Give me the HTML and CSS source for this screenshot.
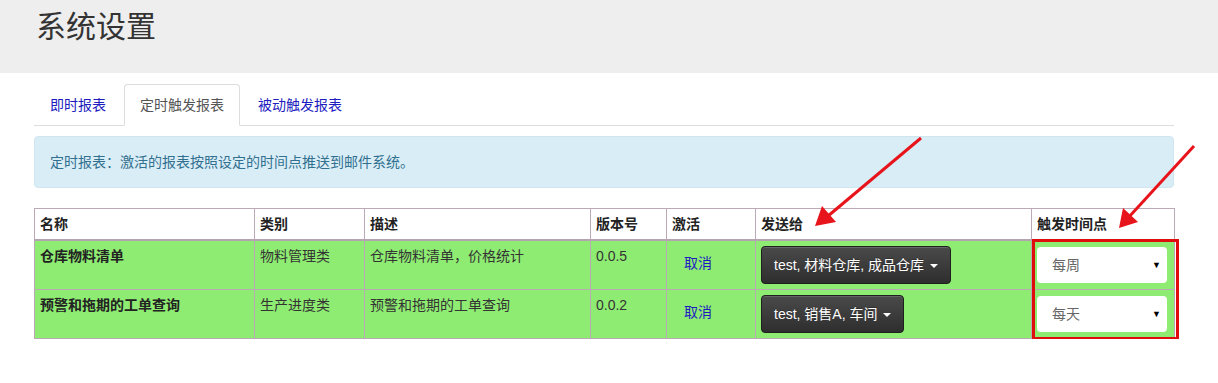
FILE: index.html
```html
<!DOCTYPE html>
<html lang="zh-CN">
<head>
    <meta charset="UTF-8">
    <title>系统设置</title>
    <link rel="stylesheet" href="styles.css">
</head>
<body>
    <div class="page-header">
        <h1>系统设置</h1>
    </div>

    <div class="container">
        <ul class="nav-tabs">
            <li><a href="#">即时报表</a></li>
            <li class="active"><a href="#">定时触发报表</a></li>
            <li><a href="#">被动触发报表</a></li>
        </ul>

        <div class="alert">定时报表：激活的报表按照设定的时间点推送到邮件系统。</div>

        <table class="report-table">
            <colgroup>
                <col class="c-name">
                <col class="c-type">
                <col class="c-desc">
                <col class="c-ver">
                <col class="c-act">
                <col class="c-send">
                <col class="c-time">
            </colgroup>
            <thead>
                <tr>
                    <th>名称</th>
                    <th>类别</th>
                    <th>描述</th>
                    <th>版本号</th>
                    <th>激活</th>
                    <th>发送给</th>
                    <th>触发时间点</th>
                </tr>
            </thead>
            <tbody>
                <tr>
                    <td class="name">仓库物料清单</td>
                    <td>物料管理类</td>
                    <td>仓库物料清单，价格统计</td>
                    <td>0.0.5</td>
                    <td><a class="btn-link" href="#">取消</a></td>
                    <td><button class="btn-dark">test, 材料仓库, 成品仓库 <span class="caret"></span></button></td>
                    <td><div class="fake-select"><span>每周</span><span class="arrow">▼</span></div></td>
                </tr>
                <tr>
                    <td class="name">预警和拖期的工单查询</td>
                    <td>生产进度类</td>
                    <td>预警和拖期的工单查询</td>
                    <td>0.0.2</td>
                    <td><a class="btn-link" href="#">取消</a></td>
                    <td><button class="btn-dark">test, 销售A, 车间 <span class="caret"></span></button></td>
                    <td><div class="fake-select"><span>每天</span><span class="arrow">▼</span></div></td>
                </tr>
            </tbody>
        </table>
    </div>

    <!-- 标注：红框和箭头 -->
    <div class="mark-box"></div>
    <svg class="marks" width="1218" height="383" viewBox="0 0 1218 383">
        <line x1="921" y1="138" x2="828" y2="216" stroke="#e8141b" stroke-width="3"/>
        <polygon points="815,226 822,206 836,222" fill="#e8141b"/>
        <line x1="1194" y1="146" x2="1128" y2="218" stroke="#e8141b" stroke-width="3"/>
        <polygon points="1119,228 1123,208 1138,222" fill="#e8141b"/>
    </svg>
</body>
</html>
```

FILE: styles.css
```css
* {
    box-sizing: border-box;
}

body {
    margin: 0;
    font-family: 'Liberation Sans', 'Noto Sans CJK SC', sans-serif;
    font-size: 14px;
    line-height: 20px;
    color: #333;
    background: #fff;
    position: relative;
}

.page-header {
    background: #eee;
    height: 73px;
    padding: 10px 0 0 36px;
}

.page-header h1 {
    margin: 0;
    font-size: 30px;
    font-weight: normal;
    line-height: 34px;
    color: #333;
}

.container {
    width: 1140px;
    margin: 11px 0 0 34px;
}

/* 标签页 */
.nav-tabs {
    list-style: none;
    margin: 0;
    padding: 0;
    display: flex;
    border-bottom: 1px solid #ddd;
}

.nav-tabs li {
    margin: 0 2px -1px 0;
}

.nav-tabs a {
    display: block;
    padding: 10px 15px;
    border: 1px solid transparent;
    border-radius: 4px 4px 0 0;
    color: #1c1cc0;
    text-decoration: none;
}

.nav-tabs .active a {
    color: #555;
    background: #fff;
    border-color: #ddd #ddd transparent;
}

.alert {
    margin: 10px 0 20px;
    padding: 15px;
    background: #d9edf7;
    border: 1px solid #cfe6f1;
    border-radius: 4px;
    color: #31708f;
}

/* 表格 */
.report-table {
    width: 1140px;
    table-layout: fixed;
    border-collapse: collapse;
}

.c-name { width: 220px; }
.c-type { width: 110px; }
.c-desc { width: 226px; }
.c-ver { width: 76px; }
.c-act { width: 89px; }
.c-send { width: 276px; }
.c-time { width: 143px; }

.report-table th,
.report-table td {
    padding: 5px;
    border: 1px solid #bba9b6;
    text-align: left;
    vertical-align: top;
}

.report-table th {
    background: #fff;
    font-weight: bold;
    color: #222;
    border-bottom: 2px solid #b3a4af;
}

.report-table td {
    background: #8fec72;
    height: 49px;
}

.report-table td.name {
    font-weight: bold;
    color: #222;
}

.btn-link {
    display: inline-block;
    padding: 7px 12px;
    color: #1c1cc0;
    text-decoration: none;
}

.btn-dark {
    font-family: inherit;
    font-size: 14px;
    line-height: 20px;
    height: 38px;
    padding: 8px 12px;
    color: #fff;
    background: linear-gradient(to bottom, #4a4a4a 0%, #2e2e2e 100%);
    border: 1px solid #1f1f1f;
    border-radius: 4px;
    box-shadow: inset 0 1px 0 rgba(255,255,255,0.15);
    text-shadow: 0 -1px 0 rgba(0,0,0,0.25);
    cursor: pointer;
}

.caret {
    display: inline-block;
    width: 0;
    height: 0;
    margin-left: 2px;
    vertical-align: middle;
    border-top: 4px solid #fff;
    border-left: 4px solid transparent;
    border-right: 4px solid transparent;
}

.fake-select {
    display: flex;
    align-items: center;
    justify-content: space-between;
    width: 130px;
    height: 36px;
    padding: 0 6px 0 15px;
    margin-top: 1px;
    background: #fff;
    border-radius: 4px;
    color: #666;
}

.fake-select .arrow {
    font-size: 9px;
    color: #000;
}

/* 标注 */
.mark-box {
    position: absolute;
    left: 1032px;
    top: 239px;
    width: 147px;
    height: 101px;
    border: 3px solid #e00d0d;
}

.marks {
    position: absolute;
    left: 0;
    top: 0;
    pointer-events: none;
}
```
